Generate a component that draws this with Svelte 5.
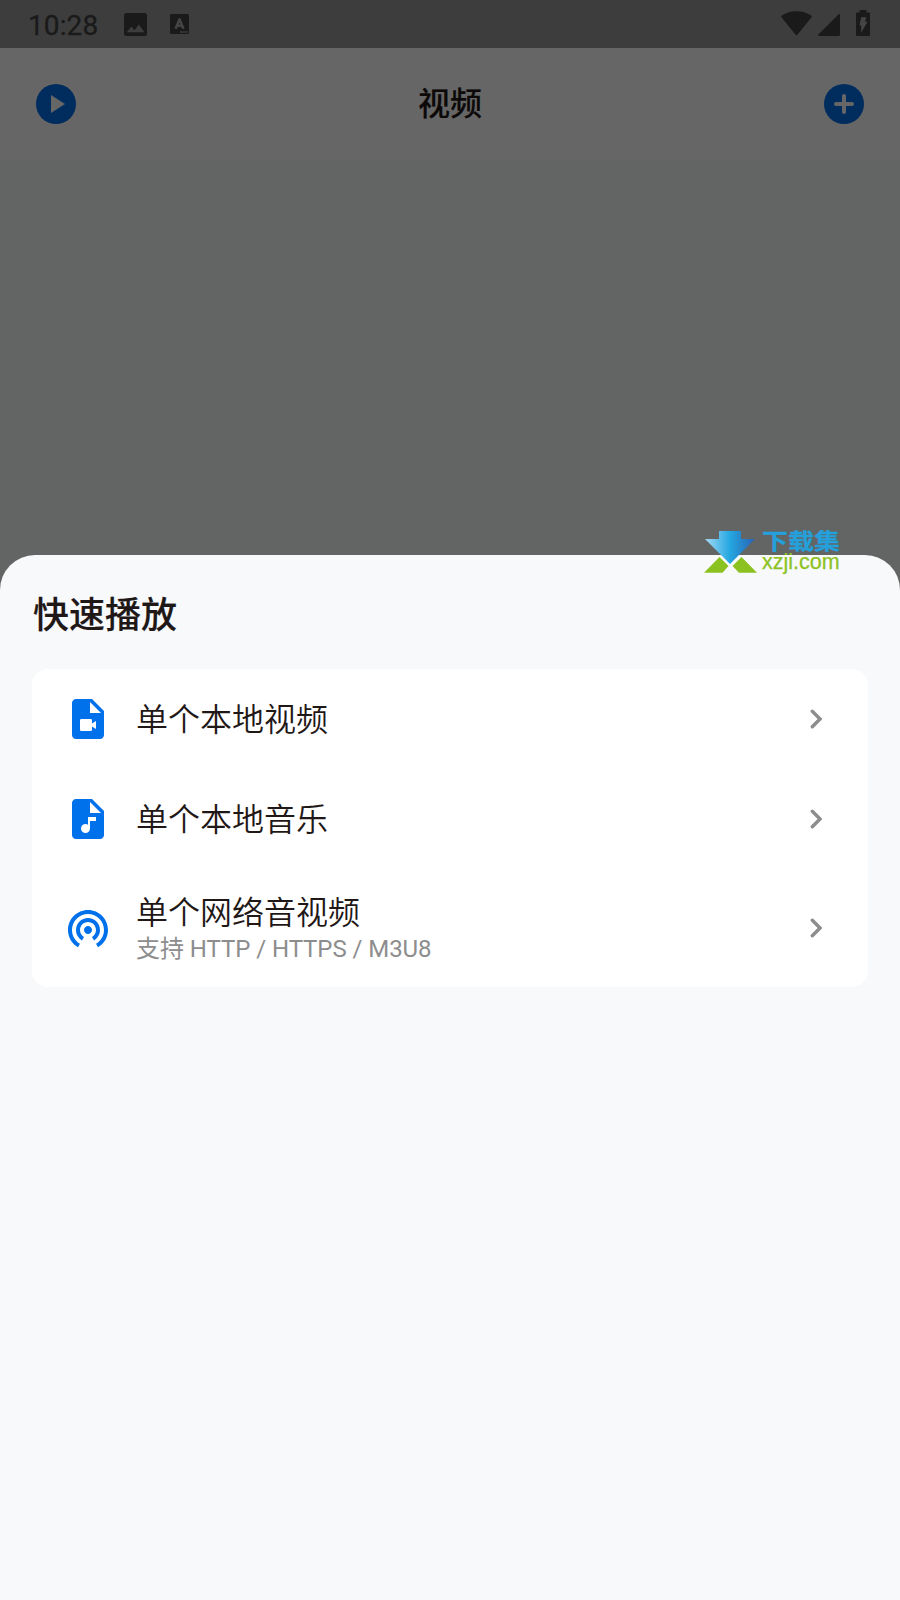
<script>
  const rows = [
    { title: '单个本地视频', icon: 'video' },
    { title: '单个本地音乐', icon: 'music' },
    { title: '单个网络音视频', icon: 'cast', sub: '支持 HTTP / HTTPS / M3U8' }
  ];
</script>

<div class="screen">
  <div class="status">
    <span class="time">10:28</span>
    <svg class="s-img" width="23" height="23" viewBox="0 0 22 22"><path fill-rule="evenodd" d="M2.5 0h17A2.5 2.5 0 0 1 22 2.5v17a2.5 2.5 0 0 1-2.5 2.5h-17A2.5 2.5 0 0 1 0 19.500v-17A2.500 2.500 0 0 1 2.500 0zM2.700 18.300h16.900l-5.400-7.300-4.200 5.500-3-3.700z" /></svg>
    <svg class="s-a" width="19" height="20" viewBox="0 0 19 20">
      <rect width="19" height="20" rx="1.500" />
      <path d="M5.600 14.800 9.500 5.200l3.900 9.600M7 11.800h5" fill="none" stroke="#454545" stroke-width="2.500" stroke-linejoin="round" />
      <path d="M10 18h7.500" stroke="#454545" stroke-width="1.500" stroke-dasharray="2 .8" />
    </svg>
    <span class="grow"></span>
    <svg class="s-wifi" width="31" height="25" viewBox="0 0 31 25"><path d="M.7 6.500C-.1 5.800 0 5 .8 4.500 9-1.300 22-1.300 30.200 4.500c.8.500.9 1.300.1 2L16.400 23.800q-.9 1.100-1.800 0z" /></svg>
    <svg class="s-cell" width="22" height="22" viewBox="0 0 22 22"><path d="M20.400.4Q22-.6 22 1v19.500q0 1.500-1.500 1.500H1Q-.7 22 .4 20.400z" /></svg>
    <svg class="s-bat" width="14" height="26" viewBox="0 0 14 26"><path d="M3.500 0h7v2.600H13q1 0 1 1V25q0 1-1 1H1q-1 0-1-1V3.600q0-1 1-1h2.500z" /><path fill="#454545" d="M5.200 7.300h5L9 11.800h2.500L5.200 22.700v-7.200H3.500z" /></svg>
  </div>

  <header>
    <svg width="40" height="40" viewBox="0 0 40 40"><circle cx="20" cy="20" r="20" fill="#002d5e" /><path d="M15 11v18l14-9z" fill="#666" /></svg>
    <h1>视频</h1>
    <svg width="40" height="40" viewBox="0 0 40 40"><circle cx="20" cy="20" r="20" fill="#002d5e" /><path d="M20 12v16M12 20h16" stroke="#666" stroke-width="4" stroke-linecap="round" /></svg>
  </header>
  <div class="backdrop"></div>

  <section class="sheet">
    <h2>快速播放</h2>
    <div class="card">
      {#each rows as row}
        <div class="row" class:tall={row.sub}>
          <svg width="48" height="48" viewBox="0 0 24 24" fill="#0070eb">
            {#if row.icon === 'cast'}
              <path d="M12 11c-1.100 0-2 .9-2 2s.9 2 2 2 2-.9 2-2-.9-2-2-2zm6 2c0-3.310-2.690-6-6-6s-6 2.690-6 6c0 2.220 1.210 4.150 3 5.190l1-1.740c-1.190-.7-2-1.970-2-3.450 0-2.210 1.790-4 4-4s4 1.790 4 4c0 1.480-.81 2.750-2 3.450l1 1.740c1.790-1.040 3-2.970 3-5.190zM12 3C6.480 3 2 7.480 2 13c0 3.700 2.010 6.920 4.990 8.650l1-1.730C5.610 18.530 4 15.960 4 13c0-4.420 3.580-8 8-8s8 3.580 8 8c0 2.960-1.610 5.530-4 6.920l1 1.730c2.990-1.730 5-4.950 5-8.650 0-5.520-4.480-10-10-10z" />
            {:else}
              <path d="M14 2H6c-1.100 0-2 .9-2 2v16c0 1.100.9 2 2 2h12c1.100 0 2-.9 2-2V8z" />
              <path fill="#fff" d="M13 3.500V9h5.500z" />
              {#if row.icon === 'video'}
                <path fill="#fff" d="M8.600 12h4.800q.6 0 .6.600v1.700l2-1.300v4l-2-1.300v1.700q0 .6-.6.600H8.600q-.6 0-.6-.6v-4.800q0-.6.600-.6z" />
              {:else}
                <path fill="#fff" d="M16 11v2h-3v3.750A2.250 2.250 0 1 1 10.750 14.500q.7 0 1.250.400V11z" />
              {/if}
            {/if}
          </svg>
          <div class="label">
            <span class="name">{row.title}</span>
            {#if row.sub}<span class="sub">{row.sub}</span>{/if}
          </div>
          <svg width="12" height="20" viewBox="0 0 12 20"><path d="M2.300 2.300 10 10l-7.700 7.700" fill="none" stroke="#8d8d8d" stroke-width="3.400" stroke-linecap="round" /></svg>
        </div>
      {/each}
    </div>
  </section>

  <div class="mark">
    <svg width="54" height="44" viewBox="0 0 54 44">
      <defs><linearGradient id="arrow" x1="0" x2="1"><stop offset="0" stop-color="#a5daf5" /><stop offset=".5" stop-color="#24a7e1" /><stop offset="1" stop-color="#2a61b4" /></linearGradient></defs>
      <path d="M15 1h22v8h14L26 34 1 9h14z" fill="url(#arrow)" />
      <path d="M0 42.700 15.500 27l9 9-6 6.700zM28.500 36l9-9L53 42.700H35z" fill="#8cc21f" />
    </svg>
    <div class="words"><span class="zh">下载集</span><span class="en">xzji.com</span></div>
  </div>
</div>

<style>
  :global(body) { margin: 0; }
  .screen {
    position: relative;
    width: 900px;
    height: 1600px;
    overflow: hidden;
    display: flex;
    flex-direction: column;
    background: #626563;
    font-family: Roboto, "Noto Sans CJK SC", sans-serif;
    color: #1f1817;
  }
  svg { display: block; flex: none; }
  .status {
    height: 48px;
    flex: none;
    box-sizing: border-box;
    padding: 0 30px 0 28px;
    display: flex;
    align-items: flex-start;
    background: #3d3d3d;
    color: #1a1a1a;
    fill: #1a1a1a;
  }
  .time { width: 95.500px; font-size: 28px; line-height: 51px; letter-spacing: .1px; -webkit-text-stroke: .3px; }
  .grow { flex: 1; }
  .s-img { margin-top: 13px; }
  .s-a { margin: 14px 0 0 23px; }
  .s-wifi { margin: 11px 6px 0 0; }
  .s-cell { margin: 14px 16px 0 0; }
  .s-bat { margin-top: 10px; }
  header {
    height: 112px;
    flex: none;
    box-sizing: border-box;
    padding: 0 36px;
    display: flex;
    align-items: center;
    justify-content: space-between;
    background: #666;
  }
  h1 { margin: 0; font-size: 32px; line-height: 48px; font-weight: 500; color: #0c0908; -webkit-text-stroke: .15px; }
  .backdrop { height: 395px; flex: none; }
  .sheet {
    flex: 1;
    box-sizing: border-box;
    padding: 34px 32px 0;
    border-radius: 35px 35px 0 0;
    background: #f7f9fb;
  }
  h2 { margin: 0 0 26px 1px; font-size: 36px; line-height: 54px; font-weight: 500; -webkit-text-stroke: .15px; }
  .card { border-radius: 16px; background: #fff; }
  .row {
    height: 100px;
    box-sizing: border-box;
    padding: 0 46px 0 32px;
    display: flex;
    align-items: center;
  }
  .row.tall { height: 118px; }
  .label { flex: 1; margin-left: 24px; display: flex; flex-direction: column; }
  .name { font-size: 32px; line-height: 42px; font-weight: 350; padding-top: 2px; }
  .sub { font-size: 24px; line-height: 32px; margin-top: -1px; letter-spacing: -.06px; color: #8d8d8d; }
  .tall .name { padding-top: 1px; }
  .mark { position: absolute; left: 704px; top: 530px; display: flex; gap: 4px; }
  .words { display: flex; flex-direction: column; }
  .zh {
    font: 700 26px/22px "Noto Sans CJK SC", sans-serif;
    color: #24a0dc;
    -webkit-text-stroke: .3px;
    transform: translateY(-1px) scaleY(.84);
  }
  .en { font: 21.500px/20px "Liberation Sans", sans-serif; color: #8cc21f; -webkit-text-stroke: .25px; }
</style>
